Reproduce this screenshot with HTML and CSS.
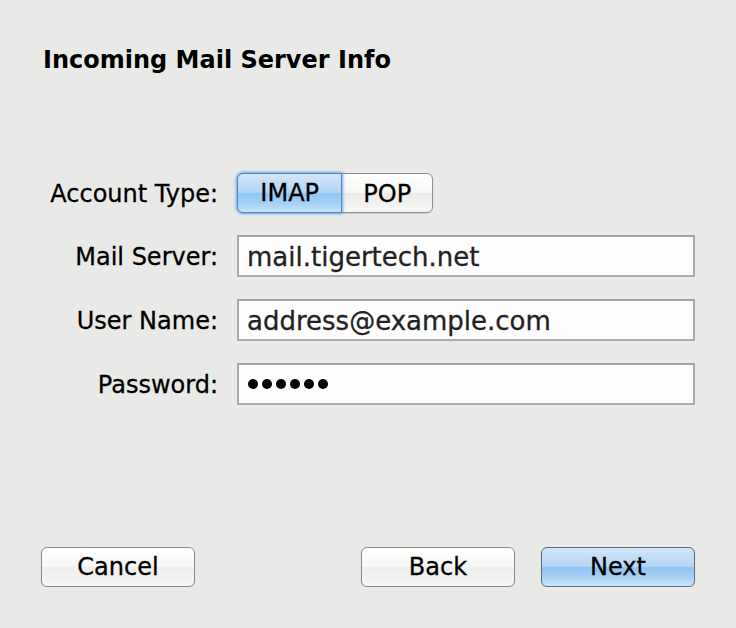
FILE: index.html
```html
<!DOCTYPE html>
<html lang="en">
<head>
    <meta charset="UTF-8">
    <meta name="viewport" content="width=device-width, initial-scale=1.0">
    <title>Incoming Mail Server Info</title>

    <link rel="stylesheet" href="styles.css">
</head>
<body>
    <div class="dialog">
        <h1 class="title">Incoming Mail Server Info</h1>

        <div class="form">
            <div class="label">Account Type:</div>
            <div class="segmented">
                <span class="segment selected">IMAP</span>
                <span class="segment">POP</span>
            </div>

            <div class="label">Mail Server:</div>
            <div class="field">mail.tigertech.net</div>

            <div class="label">User Name:</div>
            <div class="field">address@example.com</div>

            <div class="label">Password:</div>
            <div class="field password">
                <span class="dot"></span><span class="dot"></span><span class="dot"></span>
                <span class="dot"></span><span class="dot"></span><span class="dot"></span>
            </div>
        </div>

        <div class="buttons">
            <button type="button" class="btn">Cancel</button>
            <div class="right">
                <button type="button" class="btn">Back</button>
                <button type="button" class="btn primary">Next</button>
            </div>
        </div>
    </div>
</body>
</html>
```

FILE: styles.css
```css
body {
    background-color: #e9eae8;
    color: #000;
    font-family: 'DejaVu Sans', 'Liberation Sans', sans-serif;
    -webkit-text-stroke: 0.3px;
    margin: 0;
    padding: 0;
}

.dialog {
    padding: 0 41px;
}

.title {
    font-size: 24px;
    line-height: 28px;
    font-weight: bold;
    -webkit-text-stroke: 0;
    margin: 46px 0 0 2px;
}

.form {
    display: grid;
    grid-template-columns: 177px 458px;
    column-gap: 19px;
    row-gap: 22px;
    margin-top: 99px;
}

.label {
    font-size: 24px;
    height: 42px;
    line-height: 44px;
    text-align: right;
}

.form .label:first-child {
    height: 40px;
    line-height: 42px;
}

.segmented {
    display: flex;
    width: 196px;
    height: 40px;
    box-sizing: border-box;
    border: 1px solid #8e8f8d;
    border-radius: 6px;
    background: linear-gradient(#ffffff, #f6f6f5 50%, #ececeb 51%, #f7f7f6);
    box-shadow: 0 1px 1px rgba(0, 0, 0, 0.12);
}

.segment {
    font-size: 24px;
    line-height: 40px;
    text-align: center;
    width: 91px;
}

.segment.selected {
    width: 105px;
    margin: -1px 0 -1px -1px;
    border: 1px solid #4f87c9;
    border-radius: 6px 0 0 6px;
    background: linear-gradient(#d3e6f9, #b3d5f5 48%, #90c6f2 52%, #a7d3f6 80%, #c6e4fb);
    box-shadow: 0 0 3px 1px #6ea6e8;
    line-height: 38px;
    position: relative;
}

.field {
    height: 42px;
    box-sizing: border-box;
    border: 2px solid #acadab;
    border-top-color: #a2a3a1;
    background-color: #fdfefd;
    padding: 0 8px;
    font-size: 26px;
    line-height: 40px;
    color: #222;
}

.password {
    display: flex;
    align-items: center;
    gap: 4px;
    padding-left: 9px;
}

.dot {
    width: 10px;
    height: 10px;
    border-radius: 50%;
    background-color: #000;
}

.buttons {
    display: flex;
    justify-content: space-between;
    margin-top: 142px;
}

.right {
    display: flex;
    gap: 26px;
}

.btn {
    width: 154px;
    height: 40px;
    font-family: 'DejaVu Sans', 'Liberation Sans', sans-serif;
    font-size: 24px;
    color: #000;
    padding: 0;
    border: 1px solid #8a8b89;
    border-radius: 6px;
    background: linear-gradient(#ffffff, #f7f7f6 50%, #eeeeed 51%, #f6f6f5);
    box-shadow: 0 1px 1px rgba(0, 0, 0, 0.12);
    cursor: pointer;
}

.btn.primary {
    border-color: #5a6b86;
    background: linear-gradient(#d2e5f9, #b5d6f5 48%, #8fc4f1 52%, #a9d5f7 80%, #cde8fb);
}
```
